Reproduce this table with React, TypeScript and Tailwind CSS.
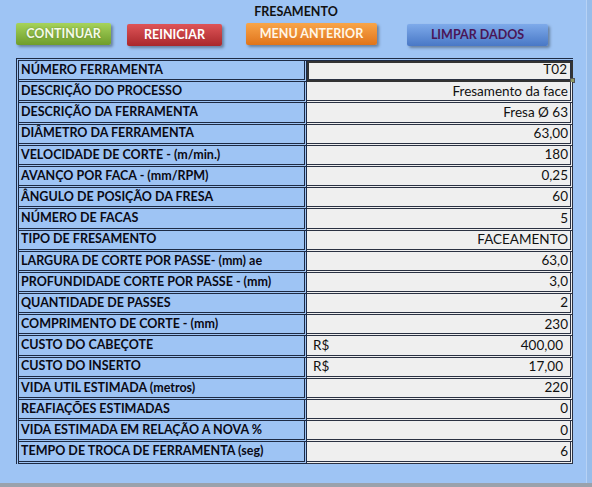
import React from "react";

const rows: { label: string; value: string; rs?: boolean }[] = [
  { label: "NÚMERO FERRAMENTA", value: "T02" },
  { label: "DESCRIÇÃO DO PROCESSO", value: "Fresamento da face" },
  { label: "DESCRIÇÃO DA FERRAMENTA", value: "Fresa Ø 63" },
  { label: "DIÂMETRO DA FERRAMENTA", value: "63,00" },
  { label: "VELOCIDADE DE CORTE - (m/min.)", value: "180" },
  { label: "AVANÇO POR FACA - (mm/RPM)", value: "0,25" },
  { label: "ÂNGULO DE POSIÇÃO DA FRESA", value: "60" },
  { label: "NÚMERO DE FACAS", value: "5" },
  { label: "TIPO DE FRESAMENTO", value: "FACEAMENTO" },
  { label: "LARGURA DE CORTE POR PASSE- (mm) ae", value: "63,0" },
  { label: "PROFUNDIDADE CORTE POR PASSE - (mm)", value: "3,0" },
  { label: "QUANTIDADE DE PASSES", value: "2" },
  { label: "COMPRIMENTO DE CORTE - (mm)", value: "230" },
  { label: "CUSTO DO CABEÇOTE", value: "400,00", rs: true },
  { label: "CUSTO DO INSERTO", value: "17,00", rs: true },
  { label: "VIDA UTIL ESTIMADA (metros)", value: "220" },
  { label: "REAFIAÇÕES ESTIMADAS", value: "0" },
  { label: "VIDA ESTIMADA EM RELAÇÃO A NOVA %", value: "0" },
  { label: "TEMPO DE TROCA DE FERRAMENTA (seg)", value: "6" },
];

export default function App() {
  return (
    <div
      className="w-[592px] h-[487px] bg-[#9ec4f4] flex flex-col overflow-hidden"
      style={{ fontFamily: "Lato, 'Open Sans', sans-serif" }}
    >
      <div className="flex flex-1">
        <div className="flex flex-col w-[586px]">
          <div className="h-[22px] pt-[4px] text-center text-[12.5px] font-bold text-[#111] leading-[16px] pl-[6px]">
            FRESAMENTO
          </div>
          <div className="flex items-start h-[36px] pt-[1px] pl-[16px]">
            <div className="w-[95px] h-[22px] flex items-center justify-center rounded-[2px] bg-gradient-to-b from-[#a6d35a] to-[#6f9d2b] text-[#f4fbe6] text-[12.5px] font-bold shadow-[2px_2px_3px_rgba(0,0,0,0.35)] [text-shadow:0_0_2px_rgba(0,0,0,0.3)]">
              CONTINUAR
            </div>
            <div className="ml-[16px] mt-[1px] w-[95px] h-[22px] flex items-center justify-center rounded-[2px] bg-gradient-to-b from-[#de5458] to-[#a9272b] text-white text-[12.5px] font-bold shadow-[2px_2px_3px_rgba(0,0,0,0.35)]">
              REINICIAR
            </div>
            <div className="ml-[24px] w-[131px] h-[22px] flex items-center justify-center rounded-[2px] bg-gradient-to-b from-[#f8a548] to-[#e07419] text-[#fff6e6] text-[12.5px] font-bold shadow-[2px_2px_3px_rgba(0,0,0,0.35)]">
              MENU ANTERIOR
            </div>
            <div className="ml-[30px] mt-[1px] w-[141px] h-[22px] flex items-center justify-center rounded-[2px] bg-gradient-to-b from-[#7eaaea] to-[#4978c6] text-[#4a1657] text-[12.5px] font-bold shadow-[2px_2px_3px_rgba(0,0,0,0.35)]">
              LIMPAR DADOS
            </div>
          </div>
          <div className="ml-[16px] w-[557px] border-l-[3px] border-t-[3px] border-double border-[#1d2a44] flex flex-col">
            {rows.map((r, i) => (
              <div key={i} className="flex h-[21.2px]">
                <div className="w-[288px] border-r-[3px] border-b-[3px] border-double border-[#1d2a44] flex items-center pl-[2px] text-[12.5px] font-bold text-[#0a0a14] whitespace-nowrap leading-none">
                  {r.label}
                </div>
                <div
                  className={
                    "relative flex-1 bg-[#efefef] border-r-[3px] border-b-[3px] border-double border-[#2a3142] flex items-center justify-between text-[13.5px] text-[#111] leading-none whitespace-nowrap " +
                    (i === 0 ? "outline outline-[2px] outline-[#333] -outline-offset-[2px] pr-[3px] pl-[6px]" : "pr-[2px] pl-[6px]")
                  }
                >
                  <span>{r.rs ? "R$" : ""}</span>
                  <span className={r.rs ? "pr-[5px]" : ""}>{r.value}</span>
                  {i === 0 && (
                    <span className="absolute right-[-5px] bottom-[-4px] w-[5px] h-[5px] bg-[#8e9a64] border border-[#555]" />
                  )}
                </div>
              </div>
            ))}
          </div>
        </div>
        <div className="flex-1 bg-[#98bdea] border-l border-[#b7d2f5]" />
      </div>
      <div className="h-[4px] bg-[#9aa2ac]" />
    </div>
  );
}
